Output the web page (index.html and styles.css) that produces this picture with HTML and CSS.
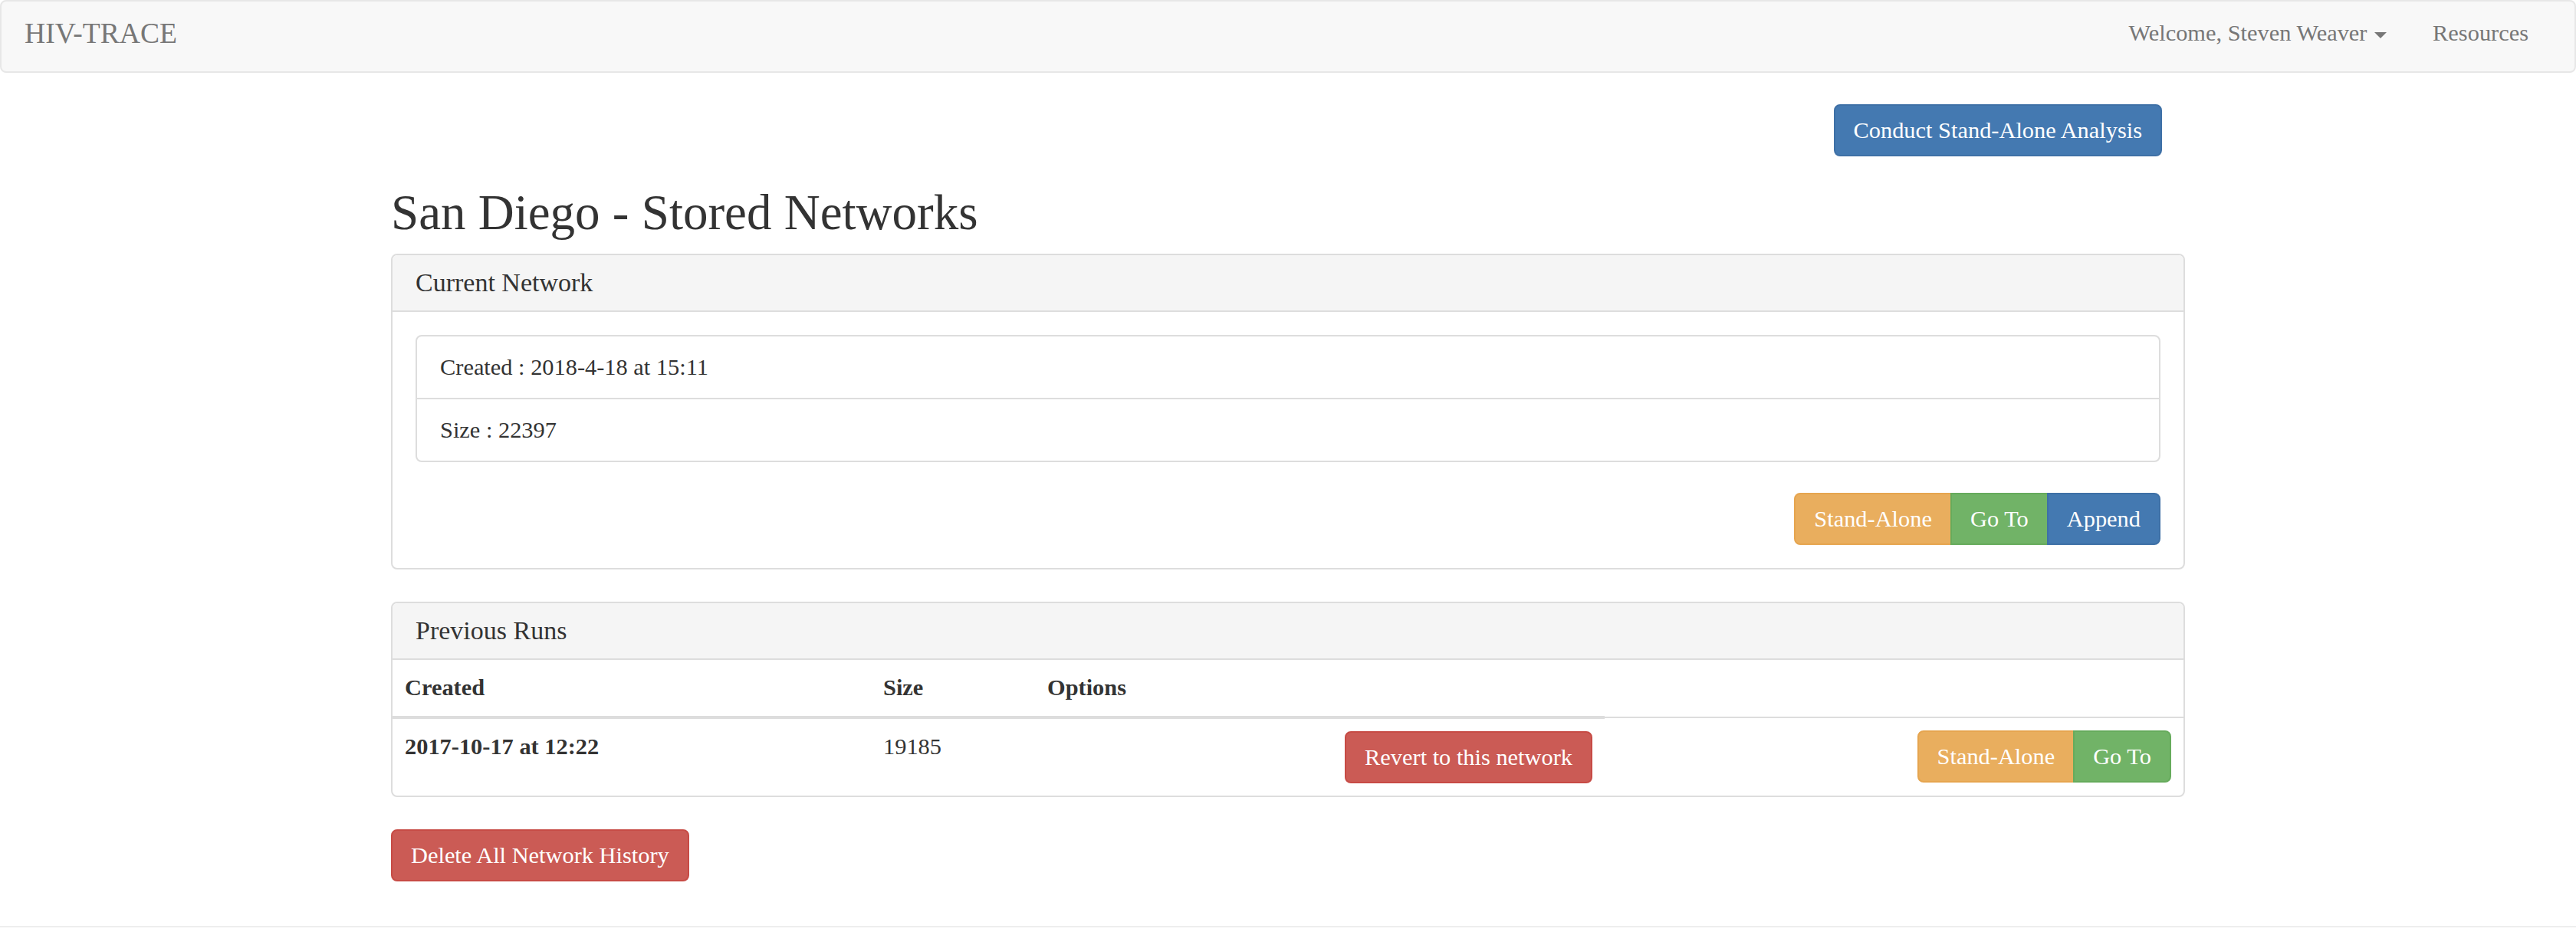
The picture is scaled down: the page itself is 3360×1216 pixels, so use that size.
FILE: index.html
```html
<!DOCTYPE html>
<html lang="en">
<head>
<meta charset="utf-8">
<title>HIV-TRACE - San Diego - Stored Networks</title>
<link rel="stylesheet" href="styles.css">
</head>
<body>
<nav class="navbar">
  <a class="brand" href="#">HIV-TRACE</a>
  <ul class="nav-right">
    <li><a href="#">Welcome, Steven Weaver <span class="caret"></span></a></li>
    <li><a href="#">Resources</a></li>
  </ul>
</nav>

<main class="container">
  <div class="toolbar">
    <button class="btn btn-primary">Conduct Stand-Alone Analysis</button>
  </div>

  <h2 class="page-title">San Diego - Stored Networks</h2>

  <section class="panel">
    <div class="panel-heading"><h3 class="panel-title">Current Network</h3></div>
    <div class="panel-body">
      <ul class="list-group">
        <li class="list-group-item">Created : 2018-4-18 at 15:11</li>
        <li class="list-group-item">Size : 22397</li>
      </ul>
      <div class="actions">
        <div class="btn-group">
          <button class="btn btn-warning">Stand-Alone</button>
          <button class="btn btn-success">Go To</button>
          <button class="btn btn-primary">Append</button>
        </div>
      </div>
    </div>
  </section>

  <section class="panel">
    <div class="panel-heading"><h3 class="panel-title">Previous Runs</h3></div>
    <table class="runs">
      <colgroup>
        <col class="col-created">
        <col class="col-size">
        <col class="col-options">
        <col class="col-actions">
      </colgroup>
      <thead>
        <tr><th>Created</th><th>Size</th><th>Options</th></tr>
      </thead>
      <tbody>
        <tr>
          <th class="run-date">2017-10-17 at 12:22</th>
          <td>19185</td>
          <td class="cell-right"><button class="btn btn-danger">Revert to this network</button></td>
          <td class="cell-right">
            <div class="btn-group">
              <button class="btn btn-warning">Stand-Alone</button>
              <button class="btn btn-success">Go To</button>
            </div>
          </td>
        </tr>
      </tbody>
    </table>
  </section>

  <button class="btn btn-danger">Delete All Network History</button>
</main>

<footer class="footer"></footer>
</body>
</html>
```

FILE: styles.css
```css
* { box-sizing: border-box; }

html, body {
  margin: 0;
  padding: 0;
  background: #fff;
}

body {
  font-family: "Liberation Serif", "Times New Roman", serif;
  font-size: 30.4px;
  line-height: 40px;
  color: #333;
}

/* ---------- navbar ---------- */
.navbar {
  display: flex;
  justify-content: space-between;
  align-items: flex-start;
  height: 95px;
  padding: 0 30px 0 0;
  background: #f8f8f8;
  border: 2px solid #e7e7e7;
  border-radius: 8px;
}

.brand {
  display: block;
  padding: 22px 30px 0 30px;
  font-size: 37.6px;
  line-height: 40px;
  color: #777;
  text-decoration: none;
}

.nav-right {
  display: flex;
  margin: 0;
  padding: 0;
  list-style: none;
}

.nav-right a {
  display: block;
  padding: 21px 30px 0 30px;
  line-height: 40px;
  color: #777;
  text-decoration: none;
}

.caret {
  display: inline-block;
  width: 0;
  height: 0;
  margin-left: 2px;
  vertical-align: middle;
  border-top: 8px solid #777;
  border-left: 8px solid transparent;
  border-right: 8px solid transparent;
}

/* ---------- layout ---------- */
.container {
  width: 2340px;
  margin: 0 auto;
}

.toolbar {
  display: flex;
  justify-content: flex-end;
  padding-right: 30px;
  margin-top: 41px;
}

.page-title {
  margin: 40px 0 21px;
  font-size: 65px;
  line-height: 66px;
  font-weight: normal;
  color: #333;
}

/* ---------- buttons ---------- */
.btn {
  display: inline-block;
  margin: 0;
  padding: 12px 24px;
  font-family: inherit;
  font-size: 30.4px;
  line-height: 40px;
  color: #fff;
  border: 2px solid transparent;
  border-radius: 8px;
  white-space: nowrap;
  cursor: pointer;
}

.btn-primary { background: #4479b1; border-color: #3e70a6; }
.btn-success { background: #71b367; border-color: #66ab5c; }
.btn-warning { background: #e9ae5e; border-color: #e6a54f; }
.btn-danger  { background: #cb5b55; border-color: #c74b45; }

.btn-group {
  display: inline-flex;
}

.btn-group .btn { border-radius: 0; }
.btn-group .btn + .btn { margin-left: -2px; }
.btn-group .btn:first-child { border-radius: 8px 0 0 8px; }
.btn-group .btn:last-child { border-radius: 0 8px 8px 0; }

/* ---------- panels ---------- */
.panel {
  margin-bottom: 42px;
  background: #fff;
  border: 2px solid #ddd;
  border-radius: 8px;
  overflow: hidden;
}

.panel-heading {
  padding: 20px 30px;
  background: #f5f5f5;
  border-bottom: 2px solid #ddd;
}

.panel-title {
  margin: 0;
  font-size: 34px;
  line-height: 32px;
  font-weight: normal;
  color: #333;
}

.panel-body {
  padding: 30px;
}

.list-group {
  margin: 0 0 40px;
  padding: 0;
  list-style: none;
}

.list-group-item {
  padding: 20px 30px;
  border: 2px solid #ddd;
  margin-bottom: -2px;
}

.list-group-item:first-child { border-radius: 8px 8px 0 0; }
.list-group-item:last-child { border-radius: 0 0 8px 8px; margin-bottom: 0; }

.actions {
  display: flex;
  justify-content: flex-end;
}

/* ---------- table ---------- */
.runs {
  width: 100%;
  border-collapse: collapse;
  table-layout: fixed;
}

.col-created { width: 624px; }
.col-size { width: 214px; }
.col-options { width: 743px; }

.runs th,
.runs td {
  padding: 16px;
  line-height: 40px;
  text-align: left;
  vertical-align: top;
}

.runs th { font-weight: bold; }

.runs thead th {
  padding-bottom: 17px;
  border-bottom: 4px solid #ddd;
}

.runs tbody th,
.runs tbody td {
  border-top: 2px solid #ddd;
}

.runs .cell-right { text-align: right; }

/* ---------- footer ---------- */
.footer {
  margin-top: 58px;
  border-top: 2px solid #eee;
  height: 20px;
}
```
